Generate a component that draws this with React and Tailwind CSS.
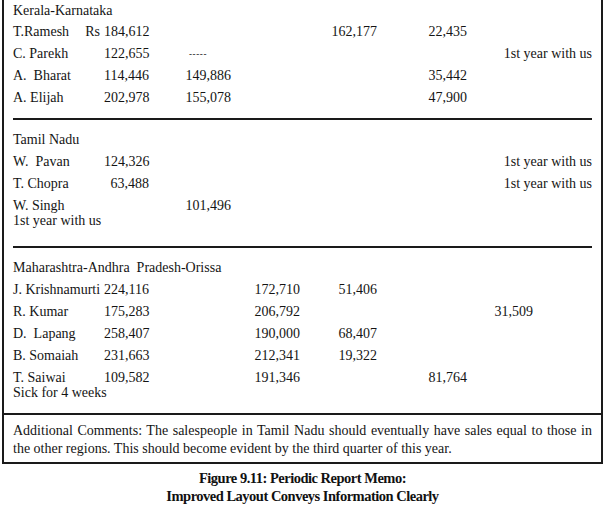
import React from "react";

const COL = {
  1: "col-start-2",
  2: "col-start-3",
  3: "col-start-4",
  4: "col-start-5",
  5: "col-start-6",
  6: "col-start-7",
};

const GRID =
  "grid grid-cols-[91px_45px_82px_69px_77px_90px_66px_59px] leading-[22px]";

function Row({ name, rs, cells = {}, dash, remark, note }) {
  return (
    <div>
      <div className={GRID}>
        <div className="col-start-1 row-start-1 flex justify-between pr-[4px] whitespace-pre">
          <span>{name}</span>
          {rs && <span>Rs</span>}
        </div>
        {Object.entries(cells).map(([k, v]) => (
          <div key={k} className={`${COL[k]} row-start-1 text-right`}>
            {v}
          </div>
        ))}
        {dash && (
          <div className="col-start-3 row-start-1 pl-[40px] text-[9px] tracking-[0.6px] font-bold">-----</div>
        )}
        {remark && (
          <div className="col-start-7 col-span-2 row-start-1 text-right whitespace-nowrap">
            {remark}
          </div>
        )}
      </div>
      {note && <div className="leading-[15px] -mt-[4px]">{note}</div>}
    </div>
  );
}

const Sep = ({ className }) => (
  <div className={`h-[2px] bg-[#1a1a1a] ${className}`} />
);

export default function App() {
  return (
    <div className="bg-white w-[605px] h-[506px] text-[#141414] font-['Liberation_Serif',serif] text-[14px]">
      <div className="ml-[2px] w-[601px] border-x-2 border-b-2 border-[#1a1a1a]">
        <div className="px-[9px]">
          {/* Kerala */}
          <div className="leading-[21.5px]">
            <div className="leading-[21px]">Kerala-Karnataka</div>
            <Row name="T.Ramesh" rs cells={{ 1: "184,612", 4: "162,177", 5: "22,435" }} />
            <Row name="C. Parekh" cells={{ 1: "122,655" }} dash remark="1st year with us" />
            <Row name="A.  Bharat" cells={{ 1: "114,446", 2: "149,886", 5: "35,442" }} />
            <Row name="A. Elijah" cells={{ 1: "202,978", 2: "155,078", 5: "47,900" }} />
          </div>
          <Sep className="mt-[9px]" />
          {/* Tamil Nadu */}
          <div className="pt-[9px]">
            <div className="leading-[22px]">Tamil Nadu</div>
            <Row name="W.  Pavan" cells={{ 1: "124,326" }} remark="1st year with us" />
            <Row name="T. Chopra" cells={{ 1: "63,488" }} remark="1st year with us" />
            <Row name="W. Singh" cells={{ 2: "101,496" }} note="1st year with us" />
          </div>
          <Sep className="mt-[18px]" />
          {/* Maharashtra */}
          <div className="pt-[9px]">
            <div className="leading-[22px] whitespace-pre">Maharashtra-Andhra  Pradesh-Orissa</div>
            <Row name="J. Krishnamurti" cells={{ 1: "224,116", 3: "172,710", 4: "51,406" }} />
            <Row name="R. Kumar" cells={{ 1: "175,283", 3: "206,792", 6: "31,509" }} />
            <Row name="D.  Lapang" cells={{ 1: "258,407", 3: "190,000", 4: "68,407" }} />
            <Row name="B. Somaiah" cells={{ 1: "231,663", 3: "212,341", 4: "19,322" }} />
            <Row name="T. Saiwai" cells={{ 1: "109,582", 3: "191,346", 5: "81,764" }} note="Sick for 4 weeks" />
          </div>
          <div className="h-[13px]" />
        </div>
        <div className="border-t-2 border-[#1a1a1a] px-[9px] pt-[7px] pb-[4px] leading-[18px] text-justify">
          Additional Comments: The salespeople in Tamil Nadu should eventually have sales equal to those in
          the other regions. This should become evident by the third quarter of this year.
        </div>
      </div>
      <div className="mt-[5px] text-center font-bold leading-[18px] text-[14.5px] tracking-[-0.5px] text-[#111]">
        <div>Figure 9.11: Periodic Report Memo:</div>
        <div>Improved Layout Conveys Information Clearly</div>
      </div>
    </div>
  );
}
